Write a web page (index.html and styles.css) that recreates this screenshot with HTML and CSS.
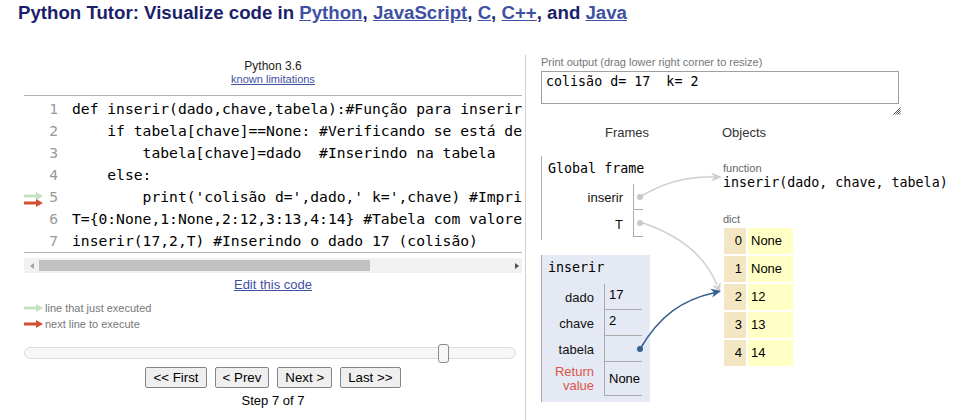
FILE: index.html
```html
<!DOCTYPE html>
<html>
<head>
<meta charset="utf-8">
<title>Python Tutor</title>
<link rel="stylesheet" href="styles.css">
</head>
<body>
<h1 class="title">Python Tutor: Visualize code in <a href="#">Python</a>, <a href="#">JavaScript</a>, <a href="#">C</a>, <a href="#">C++</a>, and <a href="#">Java</a></h1>
<div class="main">
  <div class="left">
    <div class="lang">Python 3.6</div>
    <div class="limits"><a href="#">known limitations</a></div>
    <div class="code">
      <div class="line"><span class="gut"></span><span class="num">1</span><span class="src">def inserir(dado,chave,tabela):#Função para inserir na tabela</span></div>
      <div class="line"><span class="gut"></span><span class="num">2</span><span class="src">    if tabela[chave]==None: #Verificando se está desocupado</span></div>
      <div class="line"><span class="gut"></span><span class="num">3</span><span class="src">        tabela[chave]=dado  #Inserindo na tabela</span></div>
      <div class="line"><span class="gut"></span><span class="num">4</span><span class="src">    else:</span></div>
      <div class="line"><span class="gut"><svg class="gut-arrows" width="20" height="22" viewBox="0 0 20 22"><path d="M0,8.5 H12 V6 L19,10 L12,14 V11.5 H0 Z" fill="#c6e1c2"/><path d="M0,15.5 H12 V13 L19,17 L12,21 V18.5 H0 Z" fill="#d05236"/></svg></span><span class="num">5</span><span class="src">        print('colisão d=',dado,' k=',chave) #Imprime colisão</span></div>
      <div class="line"><span class="gut"></span><span class="num">6</span><span class="src">T={0:None,1:None,2:12,3:13,4:14} #Tabela com valores</span></div>
      <div class="line"><span class="gut"></span><span class="num">7</span><span class="src">inserir(17,2,T) #Inserindo o dado 17 (colisão)</span></div>
    </div>
    <div class="hscroll">
      <div class="sb-l"><span class="tri-l"></span></div>
      <div class="sb-thumb"></div>
      <div class="sb-fill"></div>
      <div class="sb-r"><span class="tri-r"></span></div>
    </div>
    <div class="edit"><a href="#">Edit this code</a></div>
    <div class="legend">
      <div class="legend-row"><svg width="19" height="10" viewBox="0 0 19 10"><path d="M0,3.5 H12 V1 L19,5 L12,9 V6.5 H0 Z" fill="#c6e1c2"/></svg><span>line that just executed</span></div>
      <div class="legend-row"><svg width="19" height="10" viewBox="0 0 19 10"><path d="M0,3.5 H12 V1 L19,5 L12,9 V6.5 H0 Z" fill="#d05236"/></svg><span>next line to execute</span></div>
    </div>
    <div class="slider"><div class="slider-handle"></div></div>
    <div class="buttons">
      <button class="btn">&lt;&lt; First</button>
      <button class="btn">&lt; Prev</button>
      <button class="btn">Next &gt;</button>
      <button class="btn">Last &gt;&gt;</button>
    </div>
    <div class="step">Step 7 of 7</div>
  </div>
  <div class="right">
    <div class="out-label">Print output (drag lower right corner to resize)</div>
    <div class="out">colisão d= 17  k= 2</div>
    <svg class="handle" width="8" height="8" viewBox="0 0 8 8"><path d="M7.5,0.5 L0.5,7.5 M7.5,2.5 L2.5,7.5 M7.5,4.5 L4.5,7.5 M7.5,6.5 L6.5,7.5" stroke="#555" stroke-width="1"/></svg>
    <div class="viz-head"><div class="vh-frames">Frames</div><div class="vh-objects">Objects</div></div>
    <div class="viz">
      <div class="frames">
        <div class="frame frame-global">
          <div class="frame-name">Global frame</div>
          <div class="rows rows-global">
            <div class="lbl">inserir</div><div class="val"></div>
            <div class="lbl">T</div><div class="val"></div>
          </div>
        </div>
        <div class="frame frame-active">
          <div class="frame-name">inserir</div>
          <div class="rows rows-local">
            <div class="lbl">dado</div><div class="val">17</div>
            <div class="lbl">chave</div><div class="val">2</div>
            <div class="lbl">tabela</div><div class="val"></div>
            <div class="lbl ret">Return<br>value</div><div class="val val-ret">None</div>
          </div>
        </div>
      </div>
      <div class="objects">
        <div class="obj-label">function</div>
        <div class="func">inserir(dado, chave, tabela)</div>
        <div class="obj-label dict-label">dict</div>
        <div class="dict">
          <div class="dk">0</div><div class="dv">None</div>
          <div class="dk">1</div><div class="dv">None</div>
          <div class="dk">2</div><div class="dv">12</div>
          <div class="dk">3</div><div class="dv">13</div>
          <div class="dk">4</div><div class="dv">14</div>
        </div>
      </div>
    </div>
  </div>
</div>
<svg class="overlay" width="954" height="420" viewBox="0 0 954 420">
  <path d="M640,197 C665,181 690,176 716,177" fill="none" stroke="#cfcfcf" stroke-width="1.5"/>
  <polygon points="722,177 711,172.5 714.5,177 711,181.5" fill="#cfcfcf"/>
  <path d="M640,222 C680,235 705,255 717,285" fill="none" stroke="#cfcfcf" stroke-width="1.5"/>
  <polygon points="720,293 720.6,282.1 717.5,286.5 712.2,285.3" fill="#cfcfcf"/>
  <path d="M640,349 C660,315 682,300 715,292.5" fill="none" stroke="#35608f" stroke-width="1.5"/>
  <polygon points="721,291 712.3,297.6 714.2,292.6 710.3,288.8" fill="#35608f"/>
  <circle cx="640" cy="197" r="3" fill="#c8c8c8"/>
  <circle cx="640" cy="223" r="3" fill="#c8c8c8"/>
  <circle cx="640" cy="349" r="3" fill="#35608f"/>
</svg>
</body>
</html>
```

FILE: styles.css
```css
html, body {
  margin: 0;
  padding: 0;
  overflow: hidden;
}
body {
  width: 954px;
  height: 420px;
  position: relative;
  font-family: "Liberation Sans", Arial, sans-serif;
  color: #000;
  background: #fff;
}
.title {
  margin: 1px 0 0 18px;
  font-size: 18.67px;
  line-height: 24px;
  font-weight: bold;
  color: #1b1f6b;
}
.title a { color: #3f51a3; }

.main {
  display: flex;
  margin-top: 30px;
  padding-left: 24px;
  min-height: 365px;
}
.left {
  width: 498px;
  flex: none;
  padding-top: 4px;
}
.lang {
  text-align: center;
  font-size: 12px;
  line-height: 14px;
  color: #222;
}
.limits {
  text-align: center;
  font-size: 11px;
  line-height: 13px;
}
.limits a, .edit a { color: #3f51a3; }

.code {
  margin-top: 9px;
  border-top: 1px solid #b3b3b3;
  border-bottom: 1px solid #b3b3b3;
  padding-top: 2px;
  overflow: hidden;
  font-family: "DejaVu Sans Mono", monospace;
  font-size: 14.67px;
}
.line {
  display: flex;
  height: 22px;
  line-height: 22px;
  white-space: pre;
}
.gut {
  width: 20px;
  flex: none;
  position: relative;
}
.gut-arrows { display: block; }
.num {
  width: 14px;
  flex: none;
  text-align: right;
  color: #999;
}
.src {
  flex: none;
  padding-left: 14px;
}

.hscroll {
  margin-top: 5px;
  height: 15px;
  background: #f1f1f1;
  display: flex;
  align-items: center;
}
.sb-l {
  width: 15px;
  display: flex;
  justify-content: center;
}
.tri-l {
  width: 0;
  height: 0;
  border-right: 4px solid #a3a3a3;
  border-top: 3.5px solid transparent;
  border-bottom: 3.5px solid transparent;
}
.sb-thumb {
  width: 331px;
  height: 11px;
  background: #c1c1c1;
}
.sb-fill { flex: 1; }
.sb-r {
  width: 15px;
  display: flex;
  justify-content: flex-end;
  padding-right: 3px;
  box-sizing: border-box;
}
.tri-r {
  width: 0;
  height: 0;
  border-left: 4px solid #505050;
  border-top: 3.5px solid transparent;
  border-bottom: 3.5px solid transparent;
}

.edit {
  margin-top: 4px;
  text-align: center;
  font-size: 13px;
  line-height: 16px;
}
.legend {
  margin-top: 7px;
  font-size: 11px;
  color: #777;
}
.legend-row {
  display: flex;
  align-items: center;
  gap: 2px;
  height: 16px;
}
.legend-row svg { display: block; }

.slider {
  margin-top: 15px;
  position: relative;
  width: 492px;
  height: 12px;
  box-sizing: border-box;
  border: 1px solid #dcdcdc;
  border-radius: 6px;
  background: #f7f7f7;
}
.slider-handle {
  position: absolute;
  left: 413px;
  top: -4px;
  width: 11px;
  height: 19px;
  box-sizing: border-box;
  border: 1px solid #8a8a8a;
  border-radius: 3px;
  background: #f6f6f6;
}

.buttons {
  margin-top: 8px;
  display: flex;
  justify-content: center;
  gap: 8px;
}
.btn {
  height: 21px;
  padding: 0 7px;
  font-family: "Liberation Sans", Arial, sans-serif;
  font-size: 13.3px;
  color: #000;
  background: #efefef;
  border: 1px solid #858585;
  border-radius: 2px;
}
.step {
  margin-top: 5px;
  text-align: center;
  font-size: 13px;
  line-height: 16px;
}

.right {
  margin-left: 3px;
  border-left: 1px solid #d0d0d0;
  padding-left: 15px;
  flex: 1;
}
.out-label {
  font-size: 11px;
  line-height: 14px;
  color: #777;
}
.out {
  margin-top: 2px;
  width: 358px;
  height: 33px;
  box-sizing: border-box;
  border: 1px solid #a0a0a0;
  padding: 0 4px;
  font-family: "DejaVu Sans Mono", monospace;
  font-size: 13.33px;
  line-height: 20px;
  white-space: pre;
}
.handle {
  display: block;
  margin: 3px 0 0 352px;
}
.viz-head {
  display: flex;
  margin-top: 10px;
  font-size: 13px;
  line-height: 16px;
  color: #333;
}
.vh-frames {
  width: 172px;
  text-align: center;
}
.vh-objects { margin-left: 9px; }

.viz {
  display: flex;
  margin-top: 15px;
}
.frames {
  width: 172px;
  flex: none;
}
.frame {
  box-sizing: border-box;
  border-left: 1px solid #aaa;
  padding: 5px 8px 3px 6px;
}
.frame-global {
  width: fit-content;
  padding-right: 4px;
}
.frame-active {
  width: 109px;
  margin-top: 15px;
  background: #e5e9f4;
  padding-bottom: 6px;
}
.frame-name {
  font-family: "DejaVu Sans Mono", monospace;
  font-size: 13.33px;
  line-height: 16px;
  white-space: nowrap;
}
.rows {
  display: grid;
  column-gap: 10px;
  margin-top: 7px;
  font-size: 13px;
}
.rows-global {
  grid-template-columns: 75px 10px;
  grid-auto-rows: 26px;
  row-gap: 1px;
}
.rows-local {
  grid-template-columns: 46px 38px;
  grid-template-rows: 26px 26px 26px 34px;
  margin-top: 8px;
}
.lbl {
  display: flex;
  align-items: center;
  justify-content: flex-end;
  text-align: right;
  color: #111;
}
.ret {
  color: #d9564a;
  line-height: 14px;
}
.val {
  box-sizing: border-box;
  border-left: 1px solid #aaa;
  border-bottom: 1px solid #aaa;
  padding: 3px 0 0 4px;
  line-height: 16px;
}
.val-ret {
  display: flex;
  align-items: center;
  padding-top: 0;
}

.objects {
  margin-left: 10px;
  padding-top: 5px;
}
.obj-label {
  font-size: 11px;
  line-height: 14px;
  color: #666;
}
.func {
  font-family: "DejaVu Sans Mono", monospace;
  font-size: 13.33px;
  line-height: 16px;
  white-space: pre;
}
.dict-label { margin-top: 21px; }
.dict {
  display: grid;
  grid-template-columns: 22px 45px;
  grid-auto-rows: 26px;
  gap: 2px;
  margin: 2px 0 0 1px;
  font-size: 13px;
}
.dk {
  background: #f2e7c2;
  text-align: right;
  padding-right: 4px;
  line-height: 26px;
}
.dv {
  background: #ffffc6;
  padding-left: 3px;
  line-height: 26px;
}

.overlay {
  position: absolute;
  left: 0;
  top: 0;
  pointer-events: none;
}
```
